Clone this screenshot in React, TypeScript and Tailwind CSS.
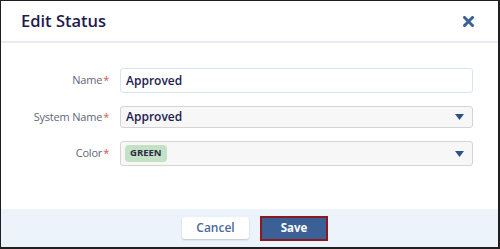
import React from "react";

const font = { fontFamily: '"Open Sans", "Noto Sans", sans-serif' };

function Caret() {
  return (
    <svg width="9" height="6" viewBox="0 0 9 6" className="shrink-0">
      <path d="M0 0 L9 0 L4.5 6 Z" fill="#2c5388" />
    </svg>
  );
}

function Label({ text }: { text: string }) {
  return (
    <div className="w-[108px] text-right text-[11px] tracking-[-0.2px] text-[#5f6678]" style={font}>
      {text}
      <span className="text-[#d9534f] ml-[1px]">*</span>
    </div>
  );
}

export default function App() {
  return (
    <div
      className="w-[500px] h-[249px] bg-white border-l border-t border-r-2 border-b-2 border-[#1f1f1f] flex flex-col overflow-hidden"
      style={font}
    >
      <div className="h-[40px] flex items-center justify-between pl-[20px] pr-[24px] shrink-0">
        <div className="text-[16.5px] font-semibold text-[#1e1b4f] leading-none pt-[1px]">Edit Status</div>
        <svg width="11" height="11" viewBox="0 0 11 11" className="mt-[1px]">
          <path d="M1.5 1.5 L9.5 9.5 M9.5 1.5 L1.5 9.5" stroke="#3a6199" strokeWidth="3" strokeLinecap="square" />
        </svg>
      </div>
      <div className="h-[2px] bg-[#e6ebf4] shrink-0" />
      <div className="flex-1 flex flex-col pt-[25px] gap-[13px]">
        <div className="flex items-center">
          <Label text="Name" />
          <div className="ml-[11px] w-[353px] h-[25px] border border-[#d6e5f5] rounded-[3px] bg-white flex items-center px-[5px] text-[12px] font-semibold text-[#1e1b4f]">
            Approved
          </div>
        </div>
        <div className="flex items-center">
          <Label text="System Name" />
          <div className="ml-[11px] w-[353px] h-[22px] border border-[#d4d4d4] rounded-[3px] bg-[#f7f7f7] flex items-center justify-between pl-[5px] pr-[8px] text-[12px] font-semibold text-[#1e1b4f]">
            <span>Approved</span>
            <Caret />
          </div>
        </div>
        <div className="flex items-center">
          <Label text="Color" />
          <div className="ml-[11px] w-[353px] h-[25px] border border-[#d4d4d4] rounded-[3px] bg-[#f7f7f7] flex items-center justify-between pl-[4px] pr-[8px]">
            <span className="h-[17px] px-[5px] rounded-[4px] bg-[#c5e1c3] text-[9.5px] font-bold text-[#2a2a4a] flex items-center">
              GREEN
            </span>
            <Caret />
          </div>
        </div>
      </div>
      <div className="h-[38px] bg-[#edf3fa] flex items-center justify-center gap-[11px] pl-[11px] shrink-0">
        <div className="w-[67px] h-[22px] bg-white rounded-[3px] shadow-[0_1px_2px_rgba(0,0,0,0.2)] flex items-center justify-center text-[12px] font-semibold text-[#4b6a99]">
          Cancel
        </div>
        <div className="w-[68px] h-[25px] bg-[#3b6096] border-2 border-[#8a1a1f] flex items-center justify-center text-[11.5px] font-bold text-white">
          Save
        </div>
      </div>
    </div>
  );
}
